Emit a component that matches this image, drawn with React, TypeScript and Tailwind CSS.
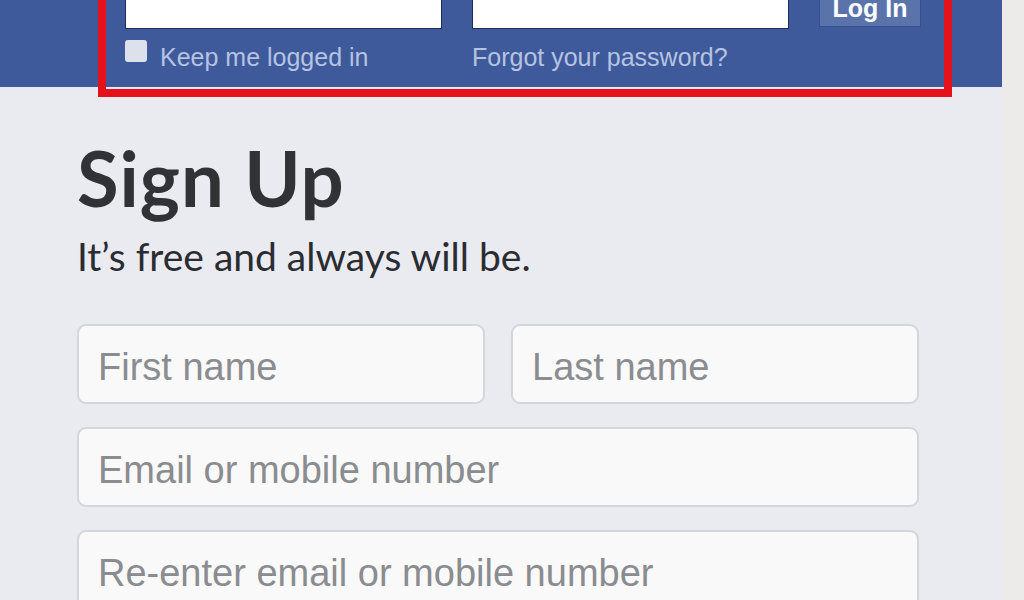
export default function App() {
  return (
    <div className="flex h-[600px] w-[1024px] overflow-hidden bg-[#ecebe9]">
      <div className="flex w-[1002px] flex-col bg-[#e9ebf1]">
        <div className="relative h-[87px] shrink-0 bg-[#3f5a9b]">
          <div className="ml-[125px] mt-[-13px] flex font-['Liberation_Sans',Arial,sans-serif]">
            <div className="flex w-[317px] flex-col">
              <div className="h-[42px] border border-[#1e2c5e] bg-white" />
              <label className="mt-[11px] flex items-start gap-[13px]">
                <span className="h-[22px] w-[22px] rounded-[3px] bg-[#dde1ec]" />
                <span className="mt-[5px] text-[25px] leading-[25px] text-[#b6c3e2]">Keep me logged in</span>
              </label>
            </div>
            <div className="ml-[30px] flex w-[317px] flex-col">
              <div className="h-[42px] border border-[#1e2c5e] bg-white" />
              <span className="mt-[16px] text-[25px] leading-[25px] text-[#b6c3e2]">Forgot your password?</span>
            </div>
            <button className="ml-[30px] flex h-[40px] w-[102px] items-center justify-center border border-[#34508f] bg-[#5a74ab] pt-[4px] text-[25px] font-bold text-white">
              Log In
            </button>
          </div>
          <div className="pointer-events-none absolute left-[98px] top-[-10px] h-[107px] w-[854px] border-[8px] border-[#e5121b]" />
        </div>

        <div className="flex flex-col pl-[77px] pr-[83px]">
          <h1 className="mt-[48px] font-['Lato',sans-serif] text-[76px] font-bold leading-[86px] tracking-[1px] text-[#303236]">
            Sign Up
          </h1>
          <p className="mt-[11px] font-['Lato',sans-serif] text-[39px] leading-[48px] text-[#2a2c31]">
            It’s free and always will be.
          </p>

          <div className="mt-[44px] flex flex-col gap-[23px] font-['Liberation_Sans',Arial,sans-serif]">
            <div className="flex gap-[26px]">
              <Field label="First name" className="flex-1" />
              <Field label="Last name" className="flex-1" />
            </div>
            <Field label="Email or mobile number" />
            <Field label="Re-enter email or mobile number" />
          </div>
        </div>
      </div>
      <div className="flex-1 bg-[#ecebe9]" />
    </div>
  );
}

function Field({ label, className = '' }: { label: string; className?: string }) {
  return (
    <div
      className={`flex h-[80px] shrink-0 items-center rounded-[9px] border-2 border-[#d3d6dc] bg-[#f9f9fa] pl-[19px] pt-[6px] ${className}`}
    >
      <span className="text-[38px] leading-[40px] text-[#8a8c8f]">{label}</span>
    </div>
  );
}
